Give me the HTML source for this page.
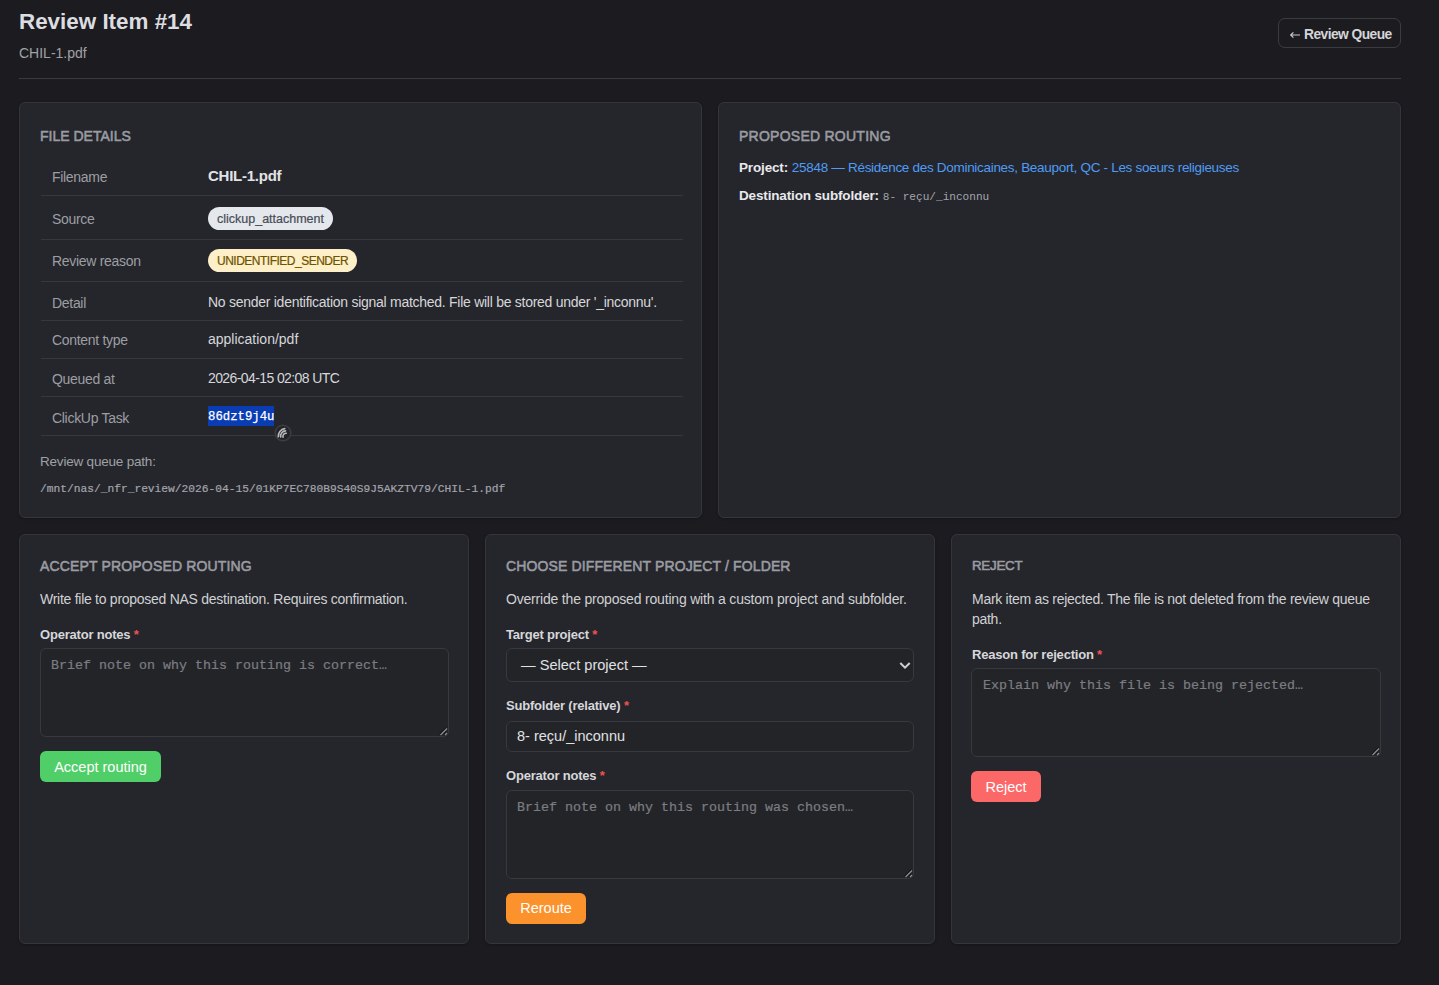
<!DOCTYPE html>
<html><head><meta charset="utf-8">
<style>
*{box-sizing:border-box;margin:0;padding:0}
html,body{width:1439px;height:985px;overflow:hidden;background:#1c1c20;font-family:"Liberation Sans",sans-serif;color:#dcdde0}
.a{position:absolute;white-space:nowrap}
.card{position:absolute;background:#25262b;border:1px solid #35363b;border-radius:6px;box-shadow:0 1px 3px rgba(0,0,0,.25)}
.h{position:absolute;font-size:14px;line-height:20px;font-weight:normal;color:#9a9ca2;-webkit-text-stroke:.55px #9a9ca2;letter-spacing:0;white-space:nowrap}
.lbl{position:absolute;font-size:14px;letter-spacing:-.3px;line-height:22px;color:#9c9ea4;white-space:nowrap}
.val{position:absolute;font-size:13px;line-height:20px;color:#d6d7da;white-space:nowrap}
.rl{position:absolute;left:21px;width:642px;height:1px;background:#37383d}
.flbl{position:absolute;font-size:13px;letter-spacing:-.2px;line-height:20px;font-weight:bold;color:#d6d7da;white-space:nowrap}
.req{color:#f05252;font-weight:bold}
.desc{position:absolute;font-size:14px;letter-spacing:-.27px;line-height:20px;color:#d0d1d4}
.ta{position:absolute;border:1px solid #38393e;border-radius:6px;background:#232428}
.ph{position:absolute;font-family:"Liberation Mono",monospace;font-size:13.33px;line-height:17px;color:#7b7d83;-webkit-text-stroke:.2px #7b7d83;white-space:nowrap}
.btn{position:absolute;border-radius:6px;color:#fff;font-size:14.5px;line-height:32.5px;text-align:center;white-space:nowrap}
.grip{position:absolute;width:8px;height:8px}
</style></head>
<body>
<!-- header -->
<div class="a" id="title" style="left:19px;top:8px;font-size:22.4px;line-height:28px;font-weight:bold;color:#dcdde0">Review Item #14</div>
<div class="a" id="subtitle" style="left:19px;top:43px;font-size:14px;line-height:20px;color:#a0a2a7">CHIL-1.pdf</div>
<div class="a" style="left:19px;top:78px;width:1382px;height:1px;background:#3a3b40"></div>
<div class="a" id="backbtn" style="left:1278px;top:18px;width:123px;height:30px;border:1px solid #3b3c41;border-radius:7px"></div>
<svg class="a" style="left:1289px;top:31px" width="12" height="8" viewBox="0 0 12 8"><path d="M11 4H1.8M4.4 1.4L1.7 4L4.4 6.6" fill="none" stroke="#c9cacd" stroke-width="1.2"/></svg>
<div class="a" id="backtxt" style="left:1304px;top:25px;font-size:13.8px;letter-spacing:-.55px;line-height:20px;font-weight:bold;color:#d4d5d8">Review Queue</div>

<!-- card 1: file details -->
<div class="card" id="card1" style="left:19px;top:102px;width:683px;height:416px">
  <div class="h" id="h1" style="left:20px;top:23px;letter-spacing:0">FILE DETAILS</div>

  <div class="lbl" style="left:32px;top:63px">Filename</div>
  <div class="val" id="fname" style="left:188px;top:63px;font-size:15px;letter-spacing:-.25px;font-weight:bold;color:#e2e3e6">CHIL-1.pdf</div>
  <div class="rl" style="top:92px"></div>

  <div class="lbl" style="left:32px;top:105px">Source</div>
  <div class="a" id="badge1" style="left:188px;top:104px;height:23px;padding:1px 9px 0;border-radius:12px;background:#e4e7eb;color:#474c57;-webkit-text-stroke:.2px #474c57;font-size:12.5px;line-height:22px">clickup_attachment</div>
  <div class="rl" style="top:136px"></div>

  <div class="lbl" style="left:32px;top:147px">Review reason</div>
  <div class="a" id="badge2" style="left:188px;top:146px;height:23px;padding:1px 9px 0;border-radius:12px;background:#fdf0c8;color:#6f5200;-webkit-text-stroke:.2px #6f5200;font-size:12px;line-height:22px;letter-spacing:-.5px">UNIDENTIFIED_SENDER</div>
  <div class="rl" style="top:178px"></div>

  <div class="lbl" style="left:32px;top:189px">Detail</div>
  <div class="val" id="detail" style="left:188px;top:189px;font-size:14px;letter-spacing:-.27px">No sender identification signal matched. File will be stored under '_inconnu'.</div>
  <div class="rl" style="top:217px"></div>

  <div class="lbl" style="left:32px;top:226px">Content type</div>
  <div class="val" style="left:188px;top:226px;font-size:14px">application/pdf</div>
  <div class="rl" style="top:255px"></div>

  <div class="lbl" style="left:32px;top:265px">Queued at</div>
  <div class="val" style="left:188px;top:265px;font-size:14px;letter-spacing:-.6px">2026-04-15 02:08 UTC</div>
  <div class="rl" style="top:293px"></div>

  <div class="lbl" style="left:32px;top:304px">ClickUp Task</div>
  <div class="a" id="task" style="left:188px;top:303px;height:20px;padding:0 0;background:#0a3db4;color:#fff;font-family:'Liberation Mono',monospace;font-size:12.3px;line-height:22px;-webkit-text-stroke:.25px #fff;overflow:hidden">86dzt9j4u</div>
  
  <div class="rl" style="top:332px"></div>
  <svg class="a" style="left:254px;top:321px" width="18" height="18" viewBox="0 0 18 18"><circle cx="9" cy="9" r="7.8" fill="#222427" stroke="#3b3d40" stroke-width="1.6"/><path d="M4.3 12.8A7.5 7.5 0 0 1 10.8 4.6M6.7 13A5.2 5.2 0 0 1 11.6 6.9M9 13.1A3.2 3.2 0 0 1 12.3 9.2" fill="none" stroke="#b9babc" stroke-width="1.6" stroke-linecap="round"/></svg>

  <div class="lbl" id="rqp" style="left:20px;top:348px;color:#9fa1a7;font-size:13.5px;letter-spacing:-.2px">Review queue path:</div>
  <div class="a" id="path" style="left:20px;top:378px;font-family:'Liberation Mono',monospace;font-size:11.24px;line-height:16px;color:#a3a5ab;-webkit-text-stroke:.2px #a3a5ab">/mnt/nas/_nfr_review/2026-04-15/01KP7EC780B9S40S9J5AKZTV79/CHIL-1.pdf</div>
</div>

<!-- card 2: proposed routing -->
<div class="card" id="card2" style="left:718px;top:102px;width:683px;height:416px">
  <div class="h" id="h2" style="left:20px;top:23px;letter-spacing:.25px">PROPOSED ROUTING</div>
  <div class="val" id="proj" style="left:20px;top:55px;font-size:13.5px"><b style="color:#e8e9ec;letter-spacing:-.15px">Project:</b> <span style="color:#4f9cf5;letter-spacing:-.3px">25848 — Résidence des Dominicaines, Beauport, QC - Les soeurs religieuses</span></div>
  <div class="val" id="dest" style="left:20px;top:83px;font-size:13.5px"><b style="color:#e8e9ec;letter-spacing:-.15px">Destination subfolder:</b> <span style="font-family:'Liberation Mono',monospace;font-size:11.1px;color:#a3a5ab">8- reçu/_inconnu</span></div>
</div>

<!-- card 3: accept -->
<div class="card" id="card3" style="left:19px;top:534px;width:450px;height:410px">
  <div class="h" id="h3" style="left:20px;top:21px;letter-spacing:.16px">ACCEPT PROPOSED ROUTING</div>
  <div class="desc" style="left:20px;top:54px">Write file to proposed NAS destination. Requires confirmation.</div>
  <div class="flbl" style="left:20px;top:90px">Operator notes <span class="req">*</span></div>
  <div class="ta" style="left:20px;top:113px;width:409px;height:89px"></div><svg class="a" style="left:419px;top:192px" width="10" height="10" viewBox="0 0 10 10"><path d="M0.8 7.3L7.3 0.8M5.3 7.3L7.3 5.3" stroke="#111214" stroke-width="1.3"/><path d="M1.5 8L8 1.5M6 8L8 6" stroke="#8d8e91" stroke-width="1.2"/></svg>
  <div class="ph" style="left:31px;top:122px">Brief note on why this routing is correct…</div>
  <div class="btn" id="accept" style="left:20px;top:216px;width:121px;height:31px;background:#50ce68">Accept routing</div>
</div>

<!-- card 4: choose different -->
<div class="card" id="card4" style="left:485px;top:534px;width:450px;height:410px">
  <div class="h" id="h4" style="left:20px;top:21px;letter-spacing:.13px">CHOOSE DIFFERENT PROJECT / FOLDER</div>
  <div class="desc" style="left:20px;top:54px;letter-spacing:-.19px">Override the proposed routing with a custom project and subfolder.</div>
  <div class="flbl" style="left:20px;top:90px">Target project <span class="req">*</span></div>
  <div class="ta" id="select" style="left:20px;top:113px;width:408px;height:34px"></div>
  <div class="a" style="left:35px;top:120px;font-size:14.6px;line-height:20px;color:#e0e1e4">— Select project —</div>
  <svg class="a" style="left:413px;top:126px" width="12" height="9" viewBox="0 0 12 9"><path d="M1.3 2 L6 6.6 L10.7 2" fill="none" stroke="#cfd0d3" stroke-width="2"/></svg>
  <div class="flbl" style="left:20px;top:161px">Subfolder (relative) <span class="req">*</span></div>
  <div class="ta" id="input" style="left:20px;top:186px;width:408px;height:31px"></div>
  <div class="a" style="left:31px;top:191px;font-size:14.5px;line-height:20px;color:#e0e1e4">8- reçu/_inconnu</div>
  <div class="flbl" style="left:20px;top:231px">Operator notes <span class="req">*</span></div>
  <div class="ta" style="left:20px;top:255px;width:408px;height:89px"></div><svg class="a" style="left:418px;top:334px" width="10" height="10" viewBox="0 0 10 10"><path d="M0.8 7.3L7.3 0.8M5.3 7.3L7.3 5.3" stroke="#111214" stroke-width="1.3"/><path d="M1.5 8L8 1.5M6 8L8 6" stroke="#8d8e91" stroke-width="1.2"/></svg>
  <div class="ph" style="left:31px;top:264px">Brief note on why this routing was chosen…</div>
  <div class="btn" id="reroute" style="left:20px;top:358px;width:80px;height:31px;background:#fb922b;line-height:30.5px">Reroute</div>
</div>

<!-- card 5: reject -->
<div class="card" id="card5" style="left:951px;top:534px;width:450px;height:410px">
  <div class="h" id="h5" style="left:20px;top:21px;font-size:13.4px;letter-spacing:-.3px">REJECT</div>
  <div class="desc" style="left:20px;top:54px;width:412px;letter-spacing:-.28px">Mark item as rejected. The file is not deleted from the review queue path.</div>
  <div class="flbl" style="left:20px;top:110px">Reason for rejection <span class="req">*</span></div>
  <div class="ta" style="left:19px;top:133px;width:410px;height:89px"></div><svg class="a" style="left:419px;top:212px" width="10" height="10" viewBox="0 0 10 10"><path d="M0.8 7.3L7.3 0.8M5.3 7.3L7.3 5.3" stroke="#111214" stroke-width="1.3"/><path d="M1.5 8L8 1.5M6 8L8 6" stroke="#8d8e91" stroke-width="1.2"/></svg>
  <div class="ph" style="left:31px;top:142px">Explain why this file is being rejected…</div>
  <div class="btn" id="reject" style="left:19px;top:236px;width:70px;height:31px;background:#fc6868">Reject</div>
</div>
</body></html>
